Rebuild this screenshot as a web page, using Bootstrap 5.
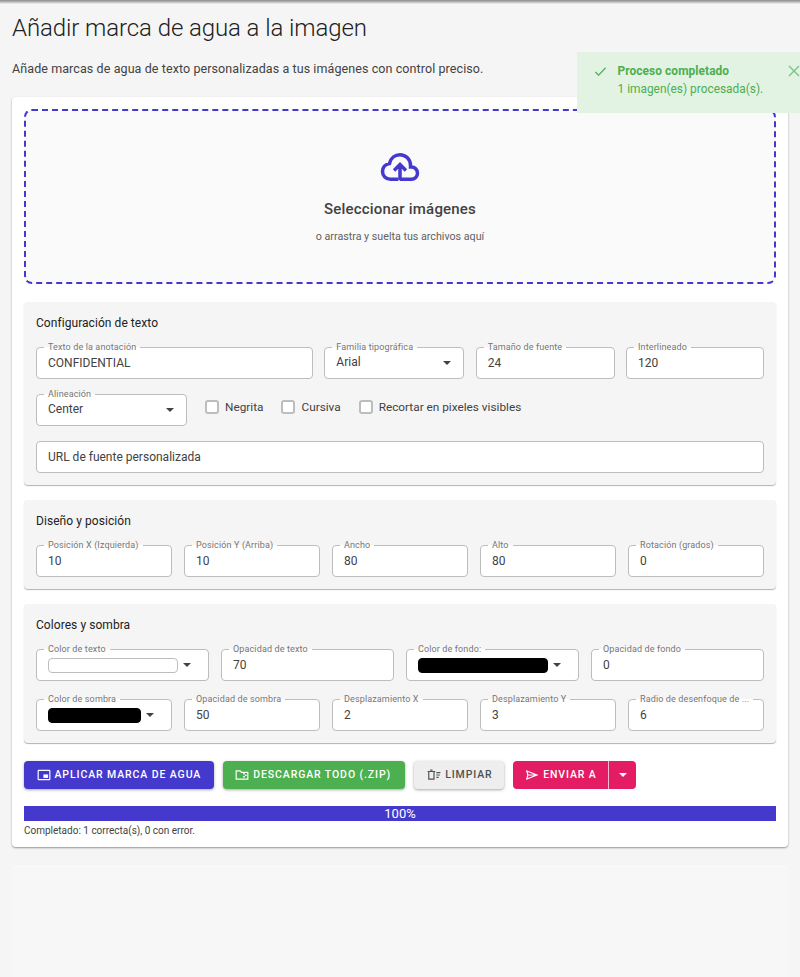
<!DOCTYPE html>
<html lang="es">
<head>
<meta charset="utf-8">
<title>Añadir marca de agua a la imagen</title>
<link href="https://cdn.jsdelivr.net/npm/bootstrap@5.3.0/dist/css/bootstrap.min.css" rel="stylesheet">
<style>
html,body{height:100%}
body{background:#f5f5f5;font-family:Roboto,"Liberation Sans",sans-serif;color:#212121;overflow:hidden}
.topshade{height:4px;background:linear-gradient(#8a8a8a,#b5b5b5 45%,#f5f5f5)}
.app-wrap{padding:8px 12px 0}
.page-title{font-size:24px;font-weight:300;line-height:32px;margin:0 0 15px;color:#212121;letter-spacing:-.09px}
.page-desc{font-size:12.5px;line-height:20px;margin:0 0 18px;color:#424242;letter-spacing:.09px}
.main-panel{background:#fff;border-radius:4px;padding:12px;height:750px;box-shadow:0 1px 2px rgba(0,0,0,.4)}
.dropzone{height:175px;border:2px dashed #4539cd;border-radius:8px;background:#fafafa;margin-bottom:18px;padding-top:35px}
.dz-icon{width:42px;height:42px;display:block;margin:0 auto 10px}
.dz-title{font-size:15px;font-weight:500;line-height:22px;color:#424242;margin-bottom:9px;letter-spacing:.2px}
.dz-sub{font-size:10.7px;line-height:16px;color:#616161}
.sec{background:#f5f5f5;border-radius:4px;padding:12px;margin-bottom:15px;box-shadow:0 1px 1px rgba(0,0,0,.3)}
.sec-title{font-size:12px;line-height:18px;color:#212121;margin-bottom:15px;letter-spacing:.06px}
.fld{position:relative;height:32px;min-width:0;background:#fff;border:1px solid #bdbdbd;border-radius:4px;padding:0 11px;display:flex;align-items:center;font-size:12px;color:#424242}
.fld-input{border:0;outline:0;padding:0;background:transparent;width:100%;min-width:0;font-size:12px;color:#424242;line-height:18px}
.fld-label{position:absolute;top:-7px;left:7px;padding:0 4px;font-size:9px;line-height:12px;color:#757575;white-space:nowrap;background:linear-gradient(#f5f5f5 50%,#fff 50%);letter-spacing:.13px}
.caret-mark{width:0;height:0;border-left:4px solid transparent;border-right:4px solid transparent;border-top:4px solid #424242;flex:none}
.w-select{justify-content:space-between;padding-right:12px}
.w-select>span:not(.fld-label):not(.caret-mark){padding-bottom:2px}
.swatch-fld{padding-right:17px}
.swatch{height:15px;flex:1;border-radius:4px;border:1px solid #bdbdbd;margin-right:5px}
.swatch-dark{background:#000;border-color:#000}
.grid-first{display:grid;grid-template-columns:277px 140px 139px 138px;justify-content:space-between;margin-bottom:15px}
.grid-four{display:grid;grid-template-columns:repeat(4,minmax(0,1fr));gap:12px;margin-bottom:18px}
.grid-five{display:grid;grid-template-columns:repeat(5,minmax(0,1fr));gap:12px}
.row-second{margin-bottom:15px}
.align-fld{width:151px}
.chk-row{gap:18px;font-size:11.8px;color:#424242;margin:-6px 0 0 18px}
.chk-row .form-check{margin:0;padding:0;min-height:0;display:flex;align-items:center;gap:6px}
.chk-row .form-check-input{float:none;margin:0;width:14px;height:14px;border:2px solid #bdbdbd;border-radius:3px;background-color:#fff}
.chk-row .form-check-label{line-height:16px}
.act-row{gap:9px;margin-top:18px}
.act-btn{height:28px;padding:0 12.5px;font-size:10.5px;font-weight:500;letter-spacing:.9px;text-transform:uppercase;border:0;border-radius:4px;display:inline-flex;align-items:center;gap:4px;box-shadow:0 1px 3px rgba(0,0,0,.35);color:#fff;white-space:nowrap}
.act-btn svg{width:14px;height:14px;flex:none}
.act-blue,.act-blue:hover{background:#4539cd;color:#fff}
.act-green,.act-green:hover{background:#4caf50;color:#fff;padding-right:13.5px}
.act-grey,.act-grey:hover{background:#eeeeee;color:#505050;padding:0 11px 0 13.5px}
.act-pink,.act-pink:hover{background:#e31c63;color:#fff;box-shadow:none}
.act-caret{width:28px;padding:0;justify-content:center;border-left:1px solid #f8bbd0!important}
.act-caret .caret-mark{border-top-color:#fff}
.bar-wrap{height:15px;background:#4539cd;border-radius:0;margin-top:17px}
.bar-wrap .progress-bar{background:#4539cd;font-size:13px;line-height:15px;overflow:visible}
.bar-note{font-size:10px;line-height:14px;margin-top:3px;color:#424242}
.ghost-card{height:120px;margin-top:19px;background:#f7f7f7;border-top:1px solid #fbfbfb;border-radius:4px 4px 0 0}
.toast-note{position:fixed;top:52px;right:0;width:223px;height:61px;background:#e2f2e3;color:#4caf50;font-size:11.9px;padding:10px 0 0 17px;display:flex;gap:10.500px;line-height:18px;z-index:5}
.toast-check{width:13px;height:13px;margin-top:3px;flex:none}
.toast-x{position:absolute;right:0;top:13px;width:12px;height:12px}
.toast-head{font-weight:700;letter-spacing:.08px}
</style>
</head>
<body>
<div class="topshade"></div>
<div class="app-wrap">
  <h1 class="page-title">Añadir marca de agua a la imagen</h1>
  <p class="page-desc">Añade marcas de agua de texto personalizadas a tus imágenes con control preciso.</p>
  <div class="main-panel">
    <div class="dropzone text-center">
      <svg class="dz-icon" viewBox="0 0 24 24" fill="none" stroke="#4539cd" stroke-width="2"><path d="M11 19H6.500C3.900 19 2 17 2 14.600 2 12.300 3.700 10.400 6 10 6.700 7 9.100 5 12 5c3.300 0 6 2.700 6 6v1h.5c2 0 3.500 1.600 3.500 3.500S20.500 19 18.500 19H12"/><path d="M12 19.500V11M8.600 14 12 10.600l3.400 3.400"/></svg>
      <div class="dz-title">Seleccionar imágenes</div>
      <div class="dz-sub">o arrastra y suelta tus archivos aquí</div>
    </div>

    <section class="sec">
      <div class="sec-title">Configuración de texto</div>
      <div class="grid-first">
        <div class="fld"><span class="fld-label">Texto de la anotación</span><input class="fld-input" value="CONFIDENTIAL"></div>
        <div class="fld w-select"><span class="fld-label">Familia tipográfica</span><span>Arial</span><span class="caret-mark"></span></div>
        <div class="fld"><span class="fld-label">Tamaño de fuente</span><input class="fld-input" value="24"></div>
        <div class="fld"><span class="fld-label">Interlineado</span><input class="fld-input" value="120"></div>
      </div>
      <div class="d-flex align-items-center row-second">
        <div class="fld align-fld w-select"><span class="fld-label">Alineación</span><span>Center</span><span class="caret-mark"></span></div>
        <div class="d-flex chk-row align-items-center">
          <div class="form-check"><input class="form-check-input" type="checkbox" id="c1"><label class="form-check-label" for="c1">Negrita</label></div>
          <div class="form-check"><input class="form-check-input" type="checkbox" id="c2"><label class="form-check-label" for="c2">Cursiva</label></div>
          <div class="form-check"><input class="form-check-input" type="checkbox" id="c3"><label class="form-check-label" for="c3">Recortar en pixeles visibles</label></div>
        </div>
      </div>
      <div class="fld"><input class="fld-input" value="URL de fuente personalizada"></div>
    </section>

    <section class="sec">
      <div class="sec-title">Diseño y posición</div>
      <div class="grid-five">
        <div class="fld"><span class="fld-label">Posición X (Izquierda)</span><input class="fld-input" value="10"></div>
        <div class="fld"><span class="fld-label">Posición Y (Arriba)</span><input class="fld-input" value="10"></div>
        <div class="fld"><span class="fld-label">Ancho</span><input class="fld-input" value="80"></div>
        <div class="fld"><span class="fld-label">Alto</span><input class="fld-input" value="80"></div>
        <div class="fld"><span class="fld-label">Rotación (grados)</span><input class="fld-input" value="0"></div>
      </div>
    </section>

    <section class="sec">
      <div class="sec-title">Colores y sombra</div>
      <div class="grid-four">
        <div class="fld swatch-fld"><span class="fld-label">Color de texto</span><span class="swatch"></span><span class="caret-mark"></span></div>
        <div class="fld"><span class="fld-label">Opacidad de texto</span><input class="fld-input" value="70"></div>
        <div class="fld swatch-fld"><span class="fld-label">Color de fondo:</span><span class="swatch swatch-dark"></span><span class="caret-mark"></span></div>
        <div class="fld"><span class="fld-label">Opacidad de fondo</span><input class="fld-input" value="0"></div>
      </div>
      <div class="grid-five">
        <div class="fld swatch-fld"><span class="fld-label">Color de sombra</span><span class="swatch swatch-dark"></span><span class="caret-mark"></span></div>
        <div class="fld"><span class="fld-label">Opacidad de sombra</span><input class="fld-input" value="50"></div>
        <div class="fld"><span class="fld-label">Desplazamiento X</span><input class="fld-input" value="2"></div>
        <div class="fld"><span class="fld-label">Desplazamiento Y</span><input class="fld-input" value="3"></div>
        <div class="fld"><span class="fld-label">Radio de desenfoque de ...</span><input class="fld-input" value="6"></div>
      </div>
    </section>

    <div class="d-flex act-row">
      <button class="btn act-btn act-blue"><svg viewBox="0 0 24 24" fill="#fff"><path fill-rule="evenodd" d="M3 3h18a2 2 0 0 1 2 2v14a2 2 0 0 1-2 2H3a2 2 0 0 1-2-2V5a2 2 0 0 1 2-2zm0 2v14h18V5z"/><path d="M11 11h8v6h-8z"/></svg>Aplicar marca de agua</button>
      <button class="btn act-btn act-green"><svg viewBox="0 0 24 24" fill="none" stroke="#fff" stroke-width="2"><path d="M2 5h7l2 2.500h11v11.500H2z"/><path d="M14 10h3M17 12.500h3M14 15h3" stroke-width="2.200"/></svg>Descargar todo (.zip)</button>
      <button class="btn act-btn act-grey"><svg viewBox="0 0 24 24" fill="none" stroke="#505050" stroke-width="2"><path d="M1 6h13M3 6v13h9V6M5.500 3.500h4"/><path d="M16 8h7M16 12h6M16 16h4"/></svg>Limpiar</button>
      <div class="btn-group">
        <button class="btn act-btn act-pink"><svg viewBox="0 0 24 24" fill="none" stroke="#fff" stroke-width="2"><path d="M3 5l17.500 7L3 19l2-7zM5 12h15"/></svg>Enviar a</button>
        <button class="btn act-btn act-pink act-caret" aria-label="Más"><span class="caret-mark"></span></button>
      </div>
    </div>

    <div class="progress bar-wrap"><div class="progress-bar" style="width:100%">100%</div></div>
    <div class="bar-note">Completado: 1 correcta(s), 0 con error.</div>
  </div>
  <div class="ghost-card"></div>
</div>

<div class="toast-note">
  <svg class="toast-check" viewBox="0 0 14 14" fill="none" stroke="#4caf50" stroke-width="1.300"><path d="M1.500 7.500 5 11l7.500-8"/></svg>
  <div><div class="toast-head">Proceso completado</div><div>1 imagen(es) procesada(s).</div></div>
  <svg class="toast-x" viewBox="0 0 12 12" fill="none" stroke="#7cc47f" stroke-width="1.400"><path d="M1 1l10 10M11 1 1 11"/></svg>
</div>
</body>
</html>
